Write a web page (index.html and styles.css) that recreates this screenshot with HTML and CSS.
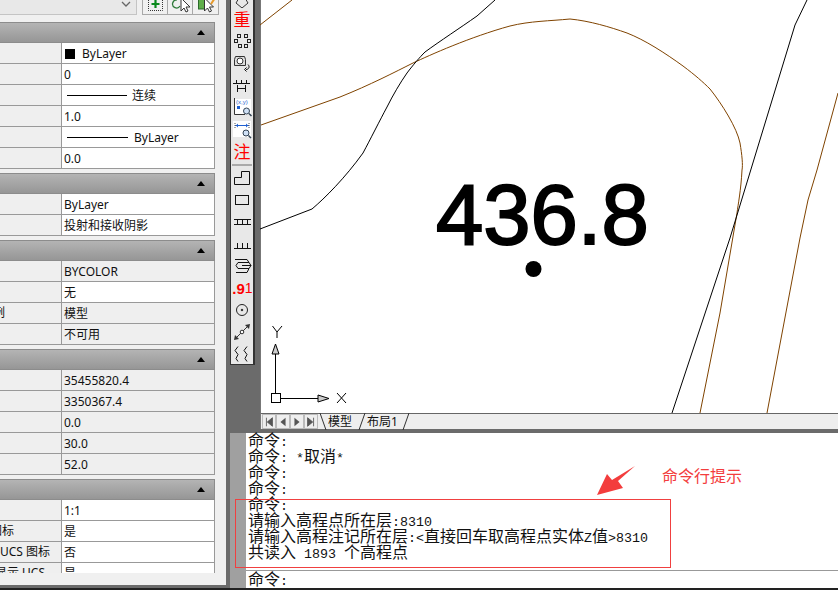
FILE: index.html
```html
<!DOCTYPE html>
<html lang="zh">
<head>
<meta charset="utf-8">
<title>CAD</title>
<link rel="stylesheet" href="styles.css">
</head>
<body>
<div class="main">
  <aside class="panel">
    <div class="topbar">
      <div class="combo"><svg class="chev" width="10" height="6" viewBox="0 0 10 6"><path d="M1 1l4 4 4-4" fill="none" stroke="#666" stroke-width="1.3"/></svg></div>
      <div class="btns">
        <div class="btn"><svg width="24" height="14" viewBox="0 0 24 14"><rect x="5.5" y="-4" width="14" height="14.500" fill="none" stroke="#333" stroke-dasharray="1 1"/><path d="M12.500 0v8M8.500 4h8" stroke="#0a8a1e" stroke-width="2.200"/></svg></div>
        <div class="btn"><svg width="24" height="14" viewBox="0 0 24 14"><path d="M9 0a4 4 0 1 0 3 6" fill="none" stroke="#2f7a3a" stroke-width="1.300"/><path d="M13-2v13l3-3 2 4 2-1-2-4h4z" fill="#fff" stroke="#333"/></svg></div>
        <div class="btn"><svg width="24" height="14" viewBox="0 0 24 14"><rect x="5.500" y="-3" width="6" height="12" fill="#5fae4b" stroke="#2b6a2b"/><path d="M11.500-2v13l3-3 2 4 2-1-2-4h4z" fill="#fff" stroke="#333"/><path d="M18 4l4-6" stroke="#e89a2a" stroke-width="2"/></svg></div>
      </div>
    </div>
    <div class="props">
      <section class="sec">
        <div class="head"><i class="tri"></i></div>
        <div class="row"><div class="k"></div><div class="v"><b class="swatch"></b>ByLayer</div></div>
        <div class="row"><div class="k"></div><div class="v">0</div></div>
        <div class="row"><div class="k"></div><div class="v"><b class="ln"></b>连续</div></div>
        <div class="row"><div class="k"></div><div class="v">1.0</div></div>
        <div class="row"><div class="k"></div><div class="v"><b class="ln wide"></b>ByLayer</div></div>
        <div class="row"><div class="k"></div><div class="v">0.0</div></div>
      </section>
      <section class="sec">
        <div class="head"><i class="tri"></i></div>
        <div class="row"><div class="k"></div><div class="v">ByLayer</div></div>
        <div class="row"><div class="k"></div><div class="v">投射和接收阴影</div></div>
      </section>
      <section class="sec">
        <div class="head"><i class="tri"></i></div>
        <div class="row"><div class="k"></div><div class="v ro">BYCOLOR</div></div>
        <div class="row"><div class="k"></div><div class="v">无</div></div>
        <div class="row"><div class="k"><span class="clip-a">注释比例</span></div><div class="v ro">模型</div></div>
        <div class="row"><div class="k"></div><div class="v ro">不可用</div></div>
      </section>
      <section class="sec">
        <div class="head"><i class="tri"></i></div>
        <div class="row"><div class="k"></div><div class="v ro">35455820.4</div></div>
        <div class="row"><div class="k"></div><div class="v ro">3350367.4</div></div>
        <div class="row"><div class="k"></div><div class="v ro">0.0</div></div>
        <div class="row"><div class="k"></div><div class="v ro">30.0</div></div>
        <div class="row"><div class="k"></div><div class="v ro">52.0</div></div>
      </section>
      <section class="sec">
        <div class="head"><i class="tri"></i></div>
        <div class="row"><div class="k"></div><div class="v">1:1</div></div>
        <div class="row"><div class="k"><span class="clip-b">显示图标</span></div><div class="v">是</div></div>
        <div class="row"><div class="k"><span class="clip-c">在原点显示 UCS 图标</span></div><div class="v">否</div></div>
        <div class="row"><div class="k"><span class="clip-d">每个视口都显示 UCS</span></div><div class="v">是</div></div>
      </section>
    </div>
  </aside>

  <div class="right">
    <div class="work">
      <nav class="tools">
        <div class="tool stub"><svg width="22" height="8" viewBox="0 0 22 8"><path d="M11 8l-6-5 3-5h6l3 5z" fill="none" stroke="#333"/></svg></div>
        <div class="tool red">重</div>
        <div class="tool"><svg width="22" height="22" viewBox="0 0 22 22" fill="none" stroke="#222"><rect x="6.500" y="4.500" width="3" height="3"/><rect x="13.500" y="4.500" width="3" height="3"/><rect x="3.500" y="9.500" width="3" height="3"/><rect x="16.500" y="9.500" width="3" height="3"/><rect x="7.500" y="14.500" width="3" height="3"/><rect x="13.500" y="14.500" width="3" height="3"/></svg></div>
        <div class="tool"><svg width="22" height="22" viewBox="0 0 22 22" fill="none" stroke="#333"><path d="M3.500 7.500l1-3h9l1 3v6h-11z" fill="#ddd"/><circle cx="9" cy="9" r="3" fill="#fff"/><path d="M17 12.500c2 2 1 5-2 5" stroke="#111"/><path d="M15.500 15.500l-2 2 2 2" stroke="#111"/></svg></div>
        <div class="tool"><svg width="22" height="22" viewBox="0 0 22 22" fill="none" stroke="#111"><path d="M2 9.500h17M5.500 6v3M10.500 6v3M15.500 6v3M6.500 11v7M14.500 11v7M6.500 14.500h8"/></svg></div>
        <div class="tool"><svg width="22" height="22" viewBox="0 0 22 22"><rect x="3" y="3" width="17" height="15" fill="#fff"/><path d="M3.500 2v16.500H14" fill="none" stroke="#333"/><text x="5" y="8" class="tiny">(x,y)</text><rect x="6" y="10" width="3" height="3" fill="#1f5fd0"/><circle cx="15.500" cy="15" r="3" fill="#cfe0f5" stroke="#345"/><path d="M18 17.500l2.500 2.500" stroke="#345" stroke-width="1.500"/></svg></div>
        <div class="tool"><svg width="22" height="22" viewBox="0 0 22 22"><rect x="2" y="3" width="18" height="16" fill="#fff"/><path d="M4 7.500h14" stroke="#1f5fd0"/><path d="M4 5v5M18 5v5" stroke="#555" stroke-dasharray="1 1"/><path d="M5 7.500l2-2v4zM17 7.500l-2-2v4z" fill="#1f5fd0"/><circle cx="15" cy="15" r="3" fill="#cfe0f5" stroke="#345"/><path d="M17.500 17.500l2.500 2.500" stroke="#345" stroke-width="1.500"/></svg></div>
        <div class="tool red">注</div>
        <hr class="sep">
        <div class="tool"><svg width="22" height="22" viewBox="0 0 22 22" fill="none" stroke="#111"><path d="M3.500 17.500v-7h7v-6h8v13z"/></svg></div>
        <div class="tool"><svg width="22" height="22" viewBox="0 0 22 22" fill="none" stroke="#111"><rect x="4.500" y="6.500" width="13" height="9"/></svg></div>
        <div class="tool"><svg width="22" height="22" viewBox="0 0 22 22" fill="none" stroke="#111"><path d="M3 8.500h17M3 13.500h17M6.500 8.500v5M11.500 8.500v5M16.500 8.500v5"/></svg></div>
        <div class="tool"><svg width="22" height="22" viewBox="0 0 22 22" fill="none" stroke="#111"><path d="M3 15.500h17M6.500 10v5.500M11.500 10v5.500M16.500 10v5.500"/></svg></div>
        <div class="tool"><svg width="22" height="22" viewBox="0 0 22 22" fill="none" stroke="#111"><path d="M4 4.500h12l2 3H7l-2 3 2 3h11l-2 4H5"/><path d="M18 7.500l2 3-2 3M11 10.500h9"/></svg></div>
        <div class="tool redb">.9<small>1</small></div>
        <div class="tool"><svg width="22" height="22" viewBox="0 0 22 22" fill="none" stroke="#222"><circle cx="11" cy="11" r="5.500"/><circle cx="11" cy="11" r=".8" fill="#222"/></svg></div>
        <div class="tool"><svg width="22" height="22" viewBox="0 0 22 22" fill="#333" stroke="#333"><path d="M4 18L18 4" fill="none"/><path d="M19 3l-1 5-4-4zM3 19l1-5 4 4z" stroke="none"/><circle cx="11" cy="11" r="1.800" fill="#fff"/></svg></div>
        <div class="tool"><svg width="22" height="22" viewBox="0 0 22 22" fill="none" stroke="#111"><path d="M7 3.500l-3 4 3 4-2 4 2 3M16 3.500l-3 4 3 4-2 4 2 3"/></svg></div>
      </nav>
      <div class="view">
        <svg class="drawing" width="578" height="413" viewBox="260 0 578 413">
          <g fill="none" stroke="#7f4300" stroke-width="1">
            <path d="M260 25L292 0"/>
            <path d="M261 125L340 97C370 85 395 72 413 63C430 55 470 37 510 26C530 21 550 21 570 19C590 21 610 27 627 33C645 40 665 53 683 66C695 75 703 82 710 89C722 104 737 128 740 143C742 155 743 165 742 170C741 190 738 205 737 213L720 313 700 413"/>
            <path d="M838 93L817 170 808 200 800 238 767 413"/>
          </g>
          <g fill="none" stroke="#000" stroke-width="1">
            <path d="M260 229L312 209C325 198 345 178 363 153C370 140 380 120 387 107C393 95 400 83 407 73C413 65 420 57 425 52C440 41 460 28 477 16L495 0"/>
            <path d="M807 0L795 25 730 238 672 413"/>
          </g>
          <text x="436" y="244" class="elev">436.8</text>
          <circle cx="533.500" cy="269" r="8" fill="#000"/>
          <g fill="none" stroke="#000" stroke-width="1">
            <rect x="271.500" y="393.500" width="9" height="9"/>
            <path d="M275.500 393V354M281 398.500h37"/>
            <path d="M275.500 344l-3.500 10h7zM329 398.500l-11-3.500v7z" fill="#ccc"/>
            <path d="M337 393l9 10M346 393l-9 10M272.500 326l4.500 6 5-6M277 332v6"/>
          </g>
        </svg>
        <div class="tabs">
          <div class="navs">
            <span class="nav"><svg width="14" height="14" viewBox="0 0 14 14"><path d="M4 2v10M11 2v10L5 7z" fill="#555" stroke="#555"/></svg></span>
            <span class="nav"><svg width="14" height="14" viewBox="0 0 14 14"><path d="M10 2v10L4 7z" fill="#555"/></svg></span>
            <span class="nav"><svg width="14" height="14" viewBox="0 0 14 14"><path d="M4 2v10l6-5z" fill="#555"/></svg></span>
            <span class="nav"><svg width="14" height="14" viewBox="0 0 14 14"><path d="M10 2v10M3 2v10l6-5z" fill="#555" stroke="#555"/></svg></span>
          </div>
          <svg class="slant" width="8" height="17" viewBox="0 0 8 17"><path d="M1 0l6 17" stroke="#333" fill="none"/></svg>
          <span class="tab on">模型</span>
          <svg class="slant" width="8" height="17" viewBox="0 0 8 17"><path d="M1 17l6-17" stroke="#333" fill="none"/></svg>
          <span class="tab">布局1</span>
          <svg class="slant" width="8" height="17" viewBox="0 0 8 17"><path d="M1 17l6-17" stroke="#333" fill="none"/></svg>
        </div>
      </div>
    </div>
    <div class="cmd">
      <div class="grip"><i class="dots"></i></div>
      <div class="term">
        <div class="log">
          <div class="line">命令<span class="m">:</span></div>
          <div class="line">命令<span class="m">: *</span>取消<span class="m">*</span></div>
          <div class="line">命令<span class="m">:</span></div>
          <div class="line">命令<span class="m">:</span></div>
          <div class="line">命令<span class="m">:</span></div>
          <div class="line">请输入高程点所在层<span class="m">:8310</span></div>
          <div class="line">请输入高程注记所在层<span class="m">:&lt;</span>直接回车取高程点实体<span class="m">Z</span>值<span class="m">&gt;8310</span></div>
          <div class="line">共读入<span class="m"> 1893 </span>个高程点</div>
        </div>
        <div class="input"><div class="line">命令<span class="m">:</span></div></div>
      </div>
      <div class="callout"></div>
      <svg class="arrow" width="40" height="30" viewBox="0 0 40 30"><path d="M38 0L21 15 26 22 0 29 10 8 15 14z" fill="#f33d3d"/></svg>
      <div class="note">命令行提示</div>
    </div>
  </div>
</div>
<div class="status"></div>
</body>
</html>
```
FILE: styles.css
```css
* { box-sizing: border-box; }
html, body { margin: 0; padding: 0; }
body {
  width: 838px;
  height: 590px;
  overflow: hidden;
  background: #222;
  font: 12px/1 "Noto Sans", "Noto Sans CJK SC", sans-serif;
  color: #111;
}
.main { display: flex; height: 588px; background: #6b6b6b; }
.status { height: 2px; background: #222; }

/* properties palette */
.panel {
  width: 226px;
  height: 585px;
  flex: none;
  background: #f0f0f0;
  overflow: hidden;
}
.topbar { display: flex; height: 22px; gap: 5px; }
.combo {
  width: 137px;
  height: 15px;
  background: #e8e8e8;
  border: 1px solid #c4c4c4;
  border-width: 0 1px 1px 0;
  display: flex;
  justify-content: flex-end;
  padding: 0 5px 0 0;
}
.chev { margin-top: 1px; }
.btns { display: flex; height: 15px; border: 1px solid #a8a8a8; border-top: 0; }
.btn { width: 25px; overflow: hidden; background: #f0f0f0; border-right: 1px solid #a8a8a8; }
.btn:last-child { border-right: 0; }
.btn svg { display: block; }
.props { width: 215px; height: 551px; overflow: hidden; display: flex; flex-direction: column; gap: 4px; }
.sec { flex: none; }
.head {
  height: 21px;
  background: linear-gradient(#b4b4b4, #969696);
  border: 1px solid #8c8c8c;
  border-left: 0;
  display: flex;
  align-items: center;
  justify-content: flex-end;
  padding-right: 9px;
}
.tri { width: 0; height: 0; border: 4px solid transparent; border-top: 0; border-bottom: 5px solid #000; }
.row {
  display: grid;
  grid-template-columns: 62px 1fr;
  height: 21px;
  border-bottom: 1px solid #999;
  border-right: 1px solid #999;
}
.k {
  background: #efefef;
  border-right: 1px solid #999;
  overflow: hidden;
  display: flex;
  align-items: center;
  justify-content: flex-end;
  white-space: nowrap;
}
.k span { flex: none; }
.clip-a { margin-right: 56px; }
.clip-b { margin-right: 47px; }
.clip-c { margin-right: 11px; }
.clip-d { margin-right: 16px; }
.v {
  background: #fff;
  display: flex;
  align-items: center;
  padding: 1px 0 0 2px;
  white-space: nowrap;
}
.v.ro { background: #efefef; }
.swatch { width: 10px; height: 10px; background: #000; margin: 0 7px 0 1px; }
.ln { width: 60px; height: 1px; background: #000; margin: 0 5px 0 3px; }
.ln.wide { width: 61px; margin-right: 6px; }

/* right side */
.right { flex: 1; display: flex; flex-direction: column; padding-left: 4px; min-width: 0; }
.work { display: flex; height: 433px; gap: 5px; }
.tools {
  width: 25px;
  height: 365px;
  flex: none;
  background: #e8e8e8;
  border: 1px solid #333;
  border-width: 0 2px 1px 1px;
  display: flex;
  flex-direction: column;
  align-items: center;
}
.tool {
  width: 22px;
  height: 22px;
  flex: none;
  display: flex;
  align-items: center;
  justify-content: center;
}
.tool svg { display: block; }
.tool.stub { height: 8px; }
.red { color: #f00; font-size: 17px; }
.redb { color: #f00; font: bold 15px/1 "Liberation Sans", sans-serif; }
.redb small { font-size: 14px; font-weight: normal; letter-spacing: -1px; }
.sep { width: 20px; height: 2px; flex: none; margin: 2px 0 1px; border: 0; background: #aaa; }
.tiny { font: 6px "Liberation Sans", sans-serif; fill: #1f5fd0; }

.view { flex: 1; min-width: 0; height: 429px; background: #fff; border-left: 1px solid #777; }
.drawing { display: block; margin-left: -1px; }
.elev { font: 85px "Liberation Sans", sans-serif; fill: #000; stroke: #000; stroke-width: 2; }
.tabs {
  height: 16px;
  background: #eee;
  border-top: 1px solid #666;
  display: flex;
  align-items: center;
  padding-left: 1px;
}
.navs { display: flex; }
.nav { width: 14px; height: 15px; border: 1px solid #bbb; display: flex; align-items: center; }
.slant { flex: none; margin-left: 1px; }
.tab { padding: 0 3px 0 1px; }
.tab.on { padding: 0 5px 0 1px; }

/* command window */
.cmd { position: relative; display: flex; height: 155px; background: #fff; }
.grip { width: 16px; flex: none; background: #a0a0a0; padding: 4px 1px; }
.dots {
  display: block;
  width: 12px;
  height: 3px;
  background-image: radial-gradient(#333 0.6px, transparent 0.7px);
  background-size: 2px 2px;
}
.term {
  flex: 1;
  display: flex;
  flex-direction: column;
  padding-left: 2px;
  font: 16px/16px "Noto Sans CJK SC", sans-serif;
  color: #111;
}
.line { height: 16px; white-space: pre; }
.log { height: 137px; margin-top: -2px; padding-bottom: 0; }
.input { border-top: 1px solid #999; margin: 2px 0 0 -2px; padding-left: 2px; height: 18px; overflow: visible; }
.input .line { margin-top: -1px; }
.m { font: 13.333px/16px "Liberation Mono", monospace; }
.callout {
  position: absolute;
  left: 5px;
  top: 66px;
  width: 436px;
  height: 69px;
  border: 1px solid #f04040;
}
.arrow { position: absolute; left: 367px; top: 33px; }
.note {
  position: absolute;
  left: 432px;
  top: 34px;
  font: 16px/16px "Noto Sans CJK SC", sans-serif;
  color: #f33d3d;
}
```
